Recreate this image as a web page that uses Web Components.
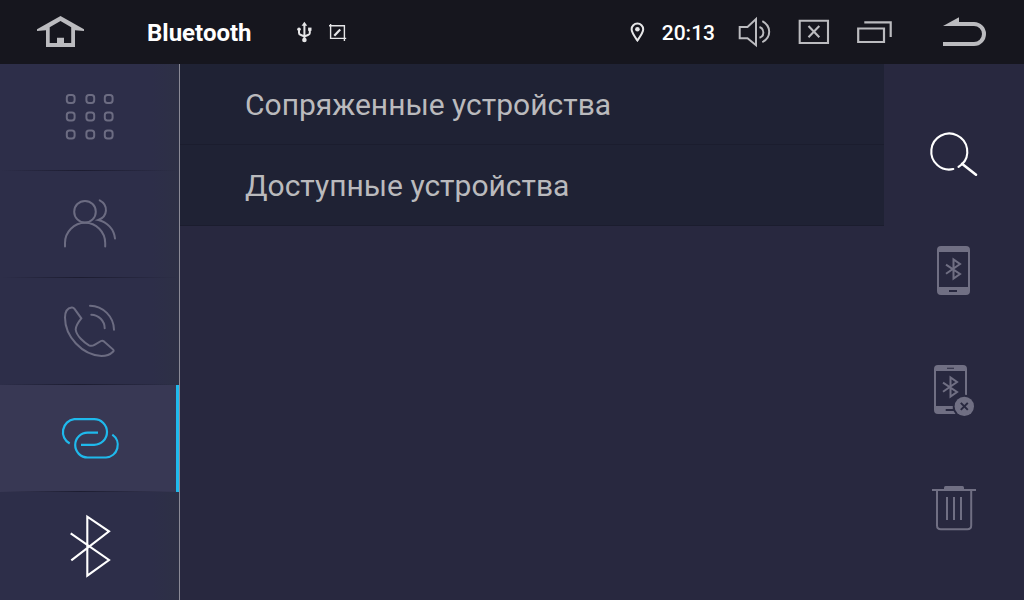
<!DOCTYPE html>
<html lang="ru">
<head>
<meta charset="utf-8">
<meta name="viewport" content="width=device-width, initial-scale=1">
<title>Bluetooth</title>
<style>
  html, body { margin: 0; height: 100%; }
  body { background: #28283f; font-family: Roboto, "Noto Sans", sans-serif; }
</style>
</head>
<body>
<bt-app></bt-app>
<script>
const define = (name, html, setup) => {
  const template = document.createElement('template');
  template.innerHTML = html;
  customElements.define(name, class extends HTMLElement {
    constructor() {
      super();
      this.attachShadow({ mode: 'open' }).append(template.content.cloneNode(true));
    }
    connectedCallback() { if (setup) setup(this, this.shadowRoot); }
  });
};

const keypad = [14, 31.5, 49.5].map(y => [13.7, 33.3, 51.7].map(x =>
  `<rect x="${x - 3.9}" y="${y - 3.9}" width="7.8" height="7.8" rx="2.6"/>`).join('')).join('');
const smallRune = '<path d="M22 23.7L36 33L29.5 37.5V18.5L36 23L22 32.7" stroke-width="2"/>';

// name: [width, height, stroke width, drawing]
const icons = {
  home: [48, 36, 0, '<path fill="currentColor" fill-rule="evenodd" d="M24.5 2L48 15.2V17L39 16.2V33H10V16.2L1 17V15.2ZM24.5 7L13.7 13.3V29H21V23.7H28V29H35.2V13.3Z"/>'],
  usb: [16, 22, 2, '<path d="M8.4 3V19M3 8.5V12Q3 13.5 5 14L8.4 15.5L12 14Q13.8 13.5 13.8 12V8.5"/><g fill="currentColor" stroke="none"><path d="M8.4 .8L11.2 4.8H5.6Z"/><circle cx="3" cy="8.3" r="1.8"/><rect x="12.1" y="6.6" width="3.4" height="3.2"/><circle cx="8.4" cy="19" r="2.3"/></g>'],
  crop: [20, 20, 1.4, '<path d="M2.6 2V16.4H18.2M1 3.7H16.4V19"/><path d="M6.3 13.7L12.2 7.6" stroke-width="2.2"/>'],
  pin: [16, 20, 2, '<path d="M7.4 18.5C3.9 13.5 1.6 10.5 1.6 7.3A5.8 5.8 0 0 1 13.2 7.3C13.2 10.5 10.9 13.5 7.4 18.5Z"/><circle cx="7.4" cy="7.2" r="2.3" fill="currentColor" stroke="none"/>'],
  volume: [36, 36, 2, '<path d="M3.7 13H11.5L20 5V31.2L11.5 24.2H3.7ZM23.5 13A5.7 5.7 0 0 1 23.5 23.8M26.3 7.2C35.5 12 35.5 23.5 26.3 28.2"/>'],
  close: [36, 36, 2.1, '<path d="M3.7 6.8H32V29H3.7ZM12.5 12L23.3 23.2M23.3 12L12.5 23.2"/>'],
  recents: [36, 36, 2.2, '<path d="M2.2 14.5H28V28H2.2ZM8.3 8.3H34.7V23"/>'],
  back: [48, 36, 4, '<path d="M3 30H34A10 10 0 0 0 34 10H17"/><path d="M3 12L19 3.2V12Z" fill="currentColor" stroke="none"/>'],
  keypad: [65, 65, 2, keypad],
  contacts: [65, 65, 2, '<circle cx="28" cy="19.7" r="10.8"/><path d="M8 54.5V51A20.1 20.2 0 0 1 48.2 51V54.5M42.7 8.3C51.5 13 51 24.5 41.3 28C50 30 57 37 58 46.5" stroke-linecap="round"/>'],
  call: [65, 65, 2, '<path d="M14.7 8.5Q16.4 8.3 17.5 9.8L24.3 19.3C20.5 24 18.7 27.5 18.7 30.5C19.5 37 27 43.5 32 46.3Q34.7 47.5 37.5 45.8L44 42Q45.4 41.2 47 42.4L56.2 50.6Q57.2 51.7 56 52.7C53 55.7 48.5 57 44.5 57C25 56 8 37.5 8 18.5C8 12 11 9 14.7 8.5ZM33 6.7A24.5 24.5 0 0 1 57 30.7M34.3 15.7A13.8 13.8 0 0 1 47.7 29.3" stroke-linecap="round"/>'],
  link: [65, 65, 2.2, '<path d="M12.7 37.5A13 13 0 0 1 17.2 13.2H37.2A12.8 12.8 0 0 1 37.2 38.8H24M41 26.7H30.6A12.4 12.4 0 0 0 30.6 51.5H49A12.5 12.5 0 0 0 55.3 28.7"/>'],
  bluetooth: [65, 65, 2.1, '<path d="M13.7 20.3L52 47L30.3 62.7V3.7L52 18.3L14.3 47.3"/>'],
  search: [60, 60, 2.1, '<path d="M29.3 46.1A18 18 0 1 1 38 41.3L34.5 43.8" stroke-linecap="round"/><path d="M38 40.8L52 51.7" stroke-width="2.6" stroke-linecap="round"/>'],
  pair: [60, 60, 0, '<path fill="currentColor" fill-rule="evenodd" d="M17 5H42Q46 5 46 9V50Q46 54 42 54H17Q13 54 13 50V9Q13 5 17 5ZM15 11V46H44V11ZM25 49V51H33V49Z"/>' + smallRune],
  unpair: [60, 60, 0, '<path fill="currentColor" fill-rule="evenodd" d="M14 6H39Q43 6 43 10V36A11.6 11.6 0 0 0 41 35.8V12H12V47H28.8V50H21.7V52H29.6L31.5 55H14Q10 55 10 51V10Q10 6 14 6ZM23 8.8V9.8H30V8.8Z"/><circle cx="40.3" cy="47.4" r="9.7" fill="currentColor"/><path d="M36.8 43.9L43.8 50.9M43.8 43.9L36.8 50.9" stroke="#28283f" stroke-width="2"/><g transform="translate(-3 0)">' + smallRune + '</g>'],
  trash: [60, 60, 2, '<path d="M8 13H52M13 13V48.5Q13 52.3 16.8 52.3H43.4Q47.2 52.3 47.2 48.5V13M23 20V43M30 20V43M37 20V43"/><path d="M20 12V10.5Q20 9 21.5 9H38.5Q40 9 40 10.5V12Z" fill="currentColor" stroke="none"/>'],
};

define('bt-icon', `<style>
  :host { display: block; flex: none; }
  svg { display: block; fill: none; stroke: currentColor; }
</style><span></span>`, (el, root) => {
  const [w, h, s, art] = icons[el.getAttribute('name')];
  root.querySelector('span').innerHTML =
    `<svg width="${w}" height="${h}" viewBox="0 0 ${w} ${h}" aria-hidden="true" stroke-width="${s}">${art}</svg>`;
});

const iconButton = (el, root) => {
  const button = root.querySelector('button');
  button.innerHTML = `<bt-icon name="${el.getAttribute('icon')}"></bt-icon>`;
  button.setAttribute('aria-label', el.getAttribute('label'));
};
const buttonReset = 'border: 0; margin: 0; padding: 0; background: none; color: inherit; font: inherit; cursor: pointer;';

define('bar-button', `<style>
  :host { display: block; flex: none; color: #bbbbbf; }
  button { ${buttonReset} display: block; }
</style><button type="button"></button>`, iconButton);

define('status-bar', `<style>
  :host { display: flex; align-items: center; justify-content: space-between; height: 64px;
    padding: 0 36px; background: #16161e; color: #fff; box-sizing: border-box; }
  div { display: flex; align-items: center; }
  h1 { margin: 0 44px 0 63px; padding-top: 2px; font-size: 24px; line-height: 32px; font-weight: 700; }
  .state { gap: 16px; color: #e6e6e8; }
  .system { gap: 21px; }
  .clock { gap: 16px; color: #e6e6e8; }
  .keys { gap: 24px; }
  time { padding-top: 2px; font-size: 21px; line-height: 32px; font-weight: 500; color: #fff; }
  .back { margin-left: 24px; }
</style>
<div>
  <bar-button icon="home" label="Домой"></bar-button>
  <h1><slot></slot></h1>
  <div class="state"><bt-icon name="usb"></bt-icon><bt-icon name="crop"></bt-icon></div>
</div>
<div class="system">
  <div class="clock"><bt-icon name="pin"></bt-icon><time>20:13</time></div>
  <div class="keys">
    <bar-button icon="volume" label="Громкость"></bar-button>
    <bar-button icon="close" label="Закрыть"></bar-button>
    <bar-button icon="recents" label="Недавние"></bar-button>
    <bar-button class="back" icon="back" label="Назад"></bar-button>
  </div>
</div>`);

define('nav-item', `<style>
  :host { display: block; flex: 0 0 107px; color: #6c6c82; }
  :host(:last-of-type) { flex: 1 0 107px; color: #fff; }
  button { ${buttonReset} display: flex; justify-content: center; align-items: flex-start;
    box-sizing: border-box; width: 100%; height: 100%; padding-top: 21px;
    background: linear-gradient(90deg, transparent, #1c1c30 45%, transparent) bottom / 100% 1px no-repeat; }
  :host(:last-of-type) button { background: none; }
  :host([selected]) { color: #1fb9ec; background: #383854; box-shadow: inset -3px 0 #1fb9ec; }
</style><button type="button"></button>`, (el, root) => {
  iconButton(el, root);
  if (el.hasAttribute('selected')) root.querySelector('button').setAttribute('aria-current', 'page');
});

define('side-nav', `<style>
  :host { display: block; width: 180px; box-sizing: border-box; border-right: 1px solid #8a8a96;
    background: linear-gradient(90deg, #2d2e49 85%, #2d3045); }
  nav { display: flex; flex-direction: column; height: 100%; }
</style><nav aria-label="Разделы"><slot></slot></nav>`);

define('device-group', `<style>
  :host { display: block; }
  button { ${buttonReset} display: block; width: 100%; box-sizing: border-box; height: 81px;
    padding: 2px 65px 0; text-align: left; background: #1f2234; border-bottom: 1px solid #1b1d2e;
    color: #bababd; font-size: 30px; line-height: 40px; }
</style><button type="button"><slot></slot></button>`);

define('tool-button', `<style>
  :host { display: flex; flex: 1; color: #706f83; }
  :host([active]) { color: #fff; }
  button { ${buttonReset} display: flex; flex: 1; align-items: center; justify-content: center; }
</style><button type="button"></button>`, iconButton);

define('tool-column', `<style>
  :host { display: flex; flex-direction: column; width: 140px; box-sizing: border-box; padding: 30px 0 34px; }
</style><slot></slot>`);

define('bt-app', `<style>
  :host { display: grid; grid-template: auto 1fr / auto 1fr auto; min-height: 100vh; background: #28283f; }
  status-bar { grid-column: 1 / -1; }
</style>
<status-bar>Bluetooth</status-bar>
<side-nav>
  <nav-item icon="keypad" label="Набор номера"></nav-item>
  <nav-item icon="contacts" label="Контакты"></nav-item>
  <nav-item icon="call" label="Вызовы"></nav-item>
  <nav-item icon="link" label="Подключение" selected></nav-item>
  <nav-item icon="bluetooth" label="Bluetooth"></nav-item>
</side-nav>
<main>
  <device-group>Сопряженные устройства</device-group>
  <device-group>Доступные устройства</device-group>
</main>
<tool-column>
  <tool-button icon="search" label="Поиск" active></tool-button>
  <tool-button icon="pair" label="Подключить"></tool-button>
  <tool-button icon="unpair" label="Отключить"></tool-button>
  <tool-button icon="trash" label="Удалить"></tool-button>
</tool-column>`);
</script>
</body>
</html>
